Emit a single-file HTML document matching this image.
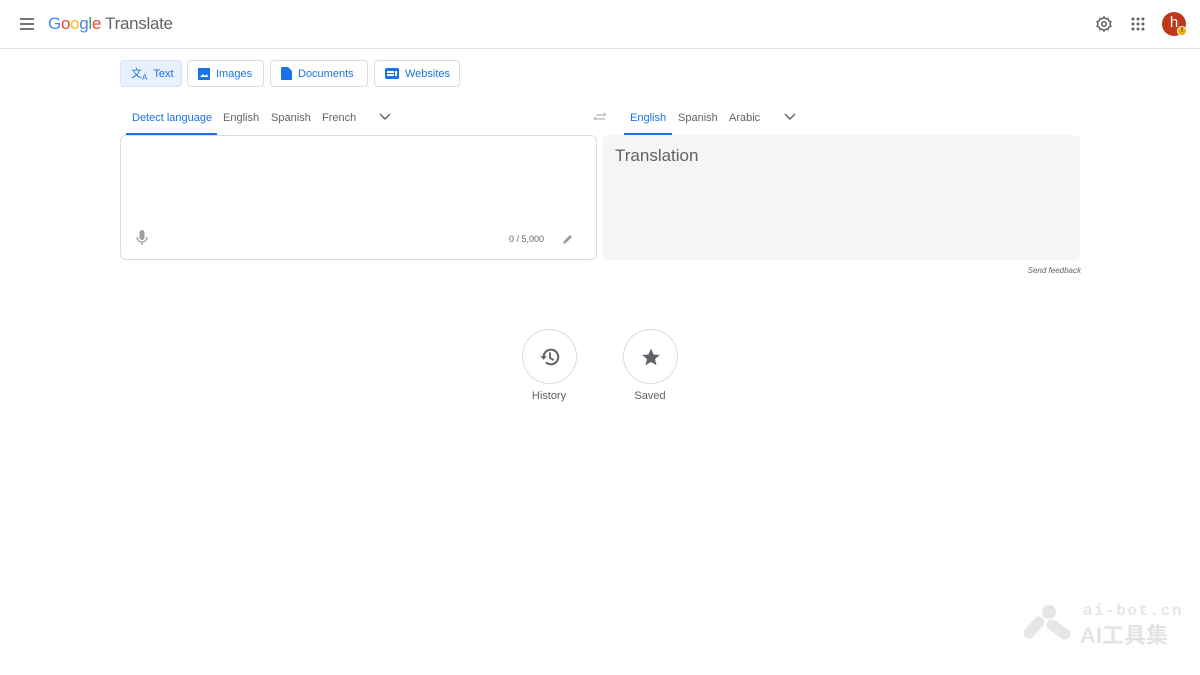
<!DOCTYPE html>
<html><head><meta charset="utf-8"><style>
*{margin:0;padding:0;box-sizing:border-box}
body{width:1200px;height:675px;background:#fff;font-family:"Liberation Sans",Arial,sans-serif;position:relative;overflow:hidden;color:#5f6368}
.abs{position:absolute}
.hdr{left:0;top:0;width:1200px;height:49px;border-bottom:1px solid #e3e3e3}
.btn{position:absolute;top:60px;height:27px;border:1px solid #dadce0;border-radius:4px;font-size:11px;color:#1a73e8;display:flex;align-items:center;padding-left:10px;gap:6px}
.lt{position:absolute;top:112px;font-size:11px;color:#5f6368}
.box{position:absolute;top:135px;height:125px;border-radius:6px}
.circ{position:absolute;top:329px;width:55px;height:55px;border:1px solid #dadce0;border-radius:50%;display:flex;align-items:center;justify-content:center}
.lbl{position:absolute;top:390px;font-size:11px;color:#5f6368;width:60px;text-align:center}
</style></head><body>
<div class="abs hdr"></div>
<svg class="abs" style="left:18px;top:16px" width="18" height="16" viewBox="0 0 18 16"><path d="M2 3h14M2 8h14M2 13h14" stroke="#5f6368" stroke-width="1.8"/></svg>
<div class="abs" style="left:48px;top:14px;font-size:17px;letter-spacing:-0.3px"><span style="color:#4285f4">G</span><span style="color:#ea4335">o</span><span style="color:#fbbc05">o</span><span style="color:#4285f4">g</span><span style="color:#34a853">l</span><span style="color:#ea4335">e</span> <span style="color:#5f6368">Translate</span></div>
<svg class="abs" style="left:1095px;top:15px" width="18" height="18" viewBox="0 0 24 24"><circle cx="12" cy="12" r="3" fill="none" stroke="#5f6368" stroke-width="2"/><path d="M12 2.5l2 2.6 3.2-.6.9 3.1 3 1.4-1.2 3 1.2 3-3 1.4-.9 3.1-3.2-.6-2 2.6-2-2.6-3.2.6-.9-3.1-3-1.4 1.2-3-1.2-3 3-1.4.9-3.1 3.2.6z" fill="none" stroke="#5f6368" stroke-width="2"/></svg>
<svg class="abs" style="left:1131px;top:17px" width="14" height="14" viewBox="0 0 14 14" fill="#5f6368"><circle cx="2" cy="2" r="1.5"/><circle cx="7" cy="2" r="1.5"/><circle cx="12" cy="2" r="1.5"/><circle cx="2" cy="7" r="1.5"/><circle cx="7" cy="7" r="1.5"/><circle cx="12" cy="7" r="1.5"/><circle cx="2" cy="12" r="1.5"/><circle cx="7" cy="12" r="1.5"/><circle cx="12" cy="12" r="1.5"/></svg>
<div class="abs" style="left:1162px;top:12px;width:24px;height:24px;border-radius:50%;background:#c0391b;color:#fff;font-size:15px;text-align:center;line-height:22px">h</div>
<div class="abs" style="left:1177px;top:26px;width:10px;height:10px;border-radius:50%;background:#f9ab00;border:1px solid #fff;font-size:7px;text-align:center;line-height:8px;color:#333;font-weight:bold">!</div>

<div class="btn" style="left:120px;width:62px;background:#e8f0fe;border-color:#d2e3fc"><span style="font-size:11px">文<sub style="font-size:8px">A</sub></span>Text</div>
<div class="btn" style="left:187px;width:77px"><svg width="12" height="12"><rect x="0" y="0" width="12" height="12" rx="1" fill="#1a73e8"/><path d="M2 9l3-3 2 2 2-2 1 3z" fill="#fff"/></svg>Images</div>
<div class="btn" style="left:270px;width:98px"><svg width="11" height="13"><path d="M0 1q0-1 1-1h6l4 4v8q0 1-1 1H1q-1 0-1-1z" fill="#1a73e8"/></svg>Documents</div>
<div class="btn" style="left:374px;width:86px"><svg width="14" height="11"><rect x="0" y="0" width="14" height="11" rx="1.5" fill="#1a73e8"/><rect x="2" y="3" width="7" height="2" fill="#fff"/><rect x="2" y="6" width="7" height="2" fill="#fff"/><rect x="10" y="3" width="2" height="5" fill="#fff"/></svg>Websites</div>

<div class="lt" style="left:132px;color:#1a73e8">Detect language</div>
<div class="abs" style="left:126px;top:133px;width:91px;height:2px;background:#1a73e8"></div>
<div class="lt" style="left:223px">English</div>
<div class="lt" style="left:271px">Spanish</div>
<div class="lt" style="left:322px">French</div>
<svg class="abs" style="left:379px;top:113px" width="12" height="8"><path d="M1 1l5 5 5-5" fill="none" stroke="#5f6368" stroke-width="1.4"/></svg>
<svg class="abs" style="left:593px;top:111px" width="14" height="12"><path d="M1 8h11M1 8l2-2M3 4h10M13 4l-2-2" fill="none" stroke="#b0b3b8" stroke-width="1.2"/></svg>
<div class="lt" style="left:630px;color:#1a73e8">English</div>
<div class="abs" style="left:624px;top:133px;width:48px;height:2px;background:#1a73e8"></div>
<div class="lt" style="left:678px">Spanish</div>
<div class="lt" style="left:729px">Arabic</div>
<svg class="abs" style="left:784px;top:113px" width="12" height="8"><path d="M1 1l5 5 5-5" fill="none" stroke="#5f6368" stroke-width="1.4"/></svg>

<div class="box" style="left:120px;width:477px;border:1px solid #dadce0"></div>
<svg class="abs" style="left:136px;top:230px" width="12" height="16"><rect x="3.5" y="0" width="5" height="10" rx="2.5" fill="#9aa0a6"/><path d="M1 7a5 5 0 0 0 10 0M6 12v3" fill="none" stroke="#9aa0a6" stroke-width="1.3"/></svg>
<div class="abs" style="left:509px;top:234px;font-size:9px;color:#5f6368">0 / 5,000</div>
<svg class="abs" style="left:562px;top:233px" width="12" height="12"><path d="M1 11l1-3 6-6 2 2-6 6z" fill="#9aa0a6"/></svg>
<div class="box" style="left:603px;width:477px;background:#f5f5f5"></div>
<div class="abs" style="left:615px;top:146px;font-size:17px;color:#5f6368">Translation</div>
<div class="abs" style="left:1000px;top:266px;width:81px;text-align:right;font-size:8px;font-style:italic;color:#5f6368">Send feedback</div>

<div class="circ" style="left:522px"><svg width="22" height="22" viewBox="0 0 24 24"><path d="M5 12a8 8 0 1 1 2.5 5.8" fill="none" stroke="#5f6368" stroke-width="2.2"/><path d="M1.5 11h7L5 15z" fill="#5f6368"/><path d="M12 7v6l4 2.5" fill="none" stroke="#5f6368" stroke-width="2"/></svg></div>
<div class="lbl" style="left:519px">History</div>
<div class="circ" style="left:623px"><svg width="20" height="20" viewBox="0 0 24 24"><path d="M12 2l3 7 7.5.6-5.7 4.9 1.8 7.4L12 18l-6.6 3.9 1.8-7.4L1.5 9.6 9 9z" fill="#5f6368"/></svg></div>
<div class="lbl" style="left:620px">Saved</div>

<svg class="abs" style="left:1022px;top:604px" width="52" height="36"><circle cx="27" cy="8" r="7" fill="#e6e6e6"/><path d="M7 29l10-11M30 21l13 9" stroke="#e6e6e6" stroke-width="11" stroke-linecap="round"/></svg>
<div class="abs" style="left:1083px;top:602px;font-size:16px;font-weight:bold;color:#e6e6e6;letter-spacing:1.5px;font-family:'Liberation Mono',monospace">ai-bot.cn</div>
<div class="abs" style="left:1080px;top:618px;font-size:22px;font-weight:bold;color:#e3e3e3;font-family:'Liberation Sans','Noto Sans CJK SC',sans-serif">AI工具集</div>
</body></html>
